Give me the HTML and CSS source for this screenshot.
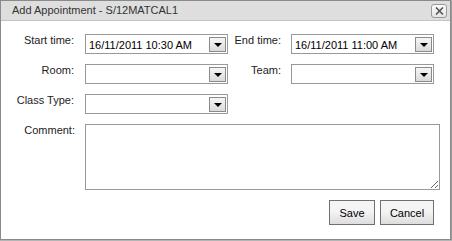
FILE: index.html
```html
<!DOCTYPE html>
<html lang="en">
<head>
  <meta charset="UTF-8">
  <title>Add Appointment</title>
  <link rel="stylesheet" href="styles.css">
</head>
<body>
  <div class="dialog">
    <div class="titlebar">
      <span class="title">Add Appointment - S/12MATCAL1</span>
      <button class="close" title="Close">
        <svg width="9" height="8" viewBox="0 0 9 8"><path d="M1 0.5 L8 7.5 M8 0.5 L1 7.5" stroke="#555" stroke-width="1.6"/></svg>
      </button>
    </div>

    <div class="form">
      <label>Start time:</label>
      <div class="combo"><span class="value">16/11/2011 10:30 AM</span><span class="arrow"></span></div>
      <label>End time:</label>
      <div class="combo"><span class="value">16/11/2011 11:00 AM</span><span class="arrow"></span></div>

      <label>Room:</label>
      <div class="combo"><span class="value"></span><span class="arrow"></span></div>
      <label>Team:</label>
      <div class="combo"><span class="value"></span><span class="arrow"></span></div>

      <label>Class Type:</label>
      <div class="combo"><span class="value"></span><span class="arrow"></span></div>
      <div></div>
      <div></div>

      <label>Comment:</label>
      <textarea class="comment"></textarea>

      <div class="buttons">
        <button class="btn">Save</button>
        <button class="btn">Cancel</button>
      </div>
    </div>
  </div>
</body>
</html>
```

FILE: styles.css
```css
body {
  margin: 0;
  font-family: "Liberation Sans", Arial, sans-serif;
  font-size: 11px;
  background-color: #b5b5b5;
}
.dialog {
  width: 449px;
  height: 238px;
  background: #FFFFFF;
  border: 1px solid #8a8a8a;
  box-shadow: 1px 1px 0 #9a9a9a;
}
.titlebar {
  height: 19px;
  background-color: #dedede;
  border-bottom: 1px solid #c4c4c4;
  display: flex;
  align-items: center;
  justify-content: space-between;
  padding: 0 3px 0 11px;
}
.title {
  color: #333;
  line-height: 13px;
}
.close {
  width: 16px;
  height: 14px;
  padding: 0;
  margin-top: 1px;
  border: 1px solid #999;
  border-radius: 3px;
  background: linear-gradient(#fafafa, #e6e6e6);
  display: flex;
  align-items: center;
  justify-content: center;
}
.form {
  display: grid;
  grid-template-columns: 84px 143px 63px 143px;
  grid-auto-rows: auto;
  row-gap: 10px;
  padding-top: 13px;
}
.form label {
  text-align: right;
  padding: 0 11px 0 0;
  color: #222;
  line-height: 13px;
}
.form label:nth-of-type(2n) {
  padding-right: 10px;
}
.combo {
  height: 18px;
  border: 1px solid #999;
  display: flex;
  justify-content: space-between;
  align-items: center;
}
.combo .value {
  padding: 2px 0 0 3px;
  line-height: 13px;
  color: #000;
}
.combo .arrow {
  width: 15px;
  height: 13px;
  margin-right: 1px;
  border: 1px solid #8a8a8a;
  background: linear-gradient(#f6f6f6, #dadada);
  position: relative;
}
/* little black triangle */
.combo .arrow::after {
  content: "";
  position: absolute;
  left: 4px;
  top: 5px;
  border-left: 4px solid transparent;
  border-right: 4px solid transparent;
  border-top: 4px solid #000;
}
.comment {
  grid-column: 2 / 5;
  width: 355px;
  height: 66px;
  margin: 0;
  padding: 2px;
  box-sizing: border-box;
  border: 1px solid #999;
  font-family: inherit;
  font-size: 11px;
}
.buttons {
  grid-column: 2 / 5;
  display: flex;
  justify-content: flex-end;
  gap: 5px;
}
.btn {
  height: 25px;
  padding: 0;
  border: 1px solid #707070;
  background: linear-gradient(#f4f4f4 45%, #dddddd);
  font-family: inherit;
  font-size: 11px;
  color: #000;
}
.btn:first-child {
  width: 46px;
}
.btn:last-child {
  width: 54px;
}
```
